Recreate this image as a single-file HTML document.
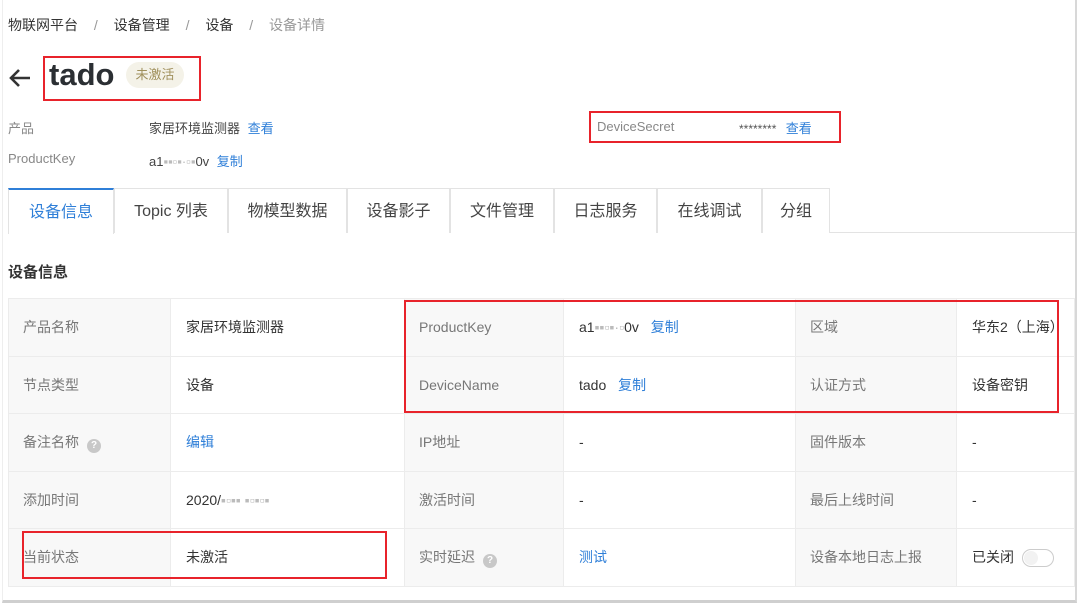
<!DOCTYPE html>
<html><head><meta charset="utf-8"><style>
*{box-sizing:border-box;margin:0;padding:0}
body{width:1080px;height:605px;background:#fff;font-family:"Liberation Sans","Noto Sans CJK SC",sans-serif;color:#333;position:relative;overflow:hidden}
.frame{position:absolute;left:2px;top:0;width:1075px;height:603px;border-right:2px solid #d8d8d8;border-bottom:3px solid #cfcfcf;border-left:1px solid #eee}
.a{position:absolute;white-space:nowrap}
.blue{color:#2f7fd8 !important}
.gray{color:#888}
.red{position:absolute;border:2px solid #e8232b}
.tabs{position:absolute;left:8px;top:188px;width:1067px;height:45px;border-bottom:1px solid #e3e3e3}
.tab{position:absolute;top:188px;height:45px;border:1px solid #e3e3e3;border-bottom:none;font-size:16px;color:#444;text-align:center;line-height:45px;background:#fff}
table{position:absolute;left:8px;top:298px;width:1067px;border-collapse:collapse;font-size:14px}
td{border:1px solid #ececec;height:57.5px;padding-left:14px}
td.l{background:#f8f8f8;color:#777}
td.v{color:#333;padding-left:15px}
.q{display:inline-block;width:14px;height:14px;border-radius:50%;background:#c8c8c8;color:#fff;font-size:10px;line-height:14px;text-align:center;margin-left:8px;vertical-align:-1px;font-weight:bold}
.sw{display:inline-block;width:32px;height:18px;border:1px solid #ccc;border-radius:9px;vertical-align:middle;margin-left:8px;position:relative}
.sw:after{content:"";position:absolute;left:1px;top:1px;width:14px;height:14px;border-radius:50%;background:#f2f2f2}
</style></head><body>
<div class="frame"></div>
<div class="a" style="left:8px;top:15px;font-size:14px;color:#333">物联网平台 <span style="color:#999;margin:0 12px">/</span> 设备管理 <span style="color:#999;margin:0 12px">/</span> 设备 <span style="color:#999;margin:0 12px">/</span> <span style="color:#999">设备详情</span></div>
<svg class="a" style="left:8px;top:68px" width="24" height="20" viewBox="0 0 24 20"><path d="M22 10H3M11 2L3 10l8 8" stroke="#333" stroke-width="2.6" fill="none"/></svg>
<div class="a" style="left:49px;top:57px;font-size:31px;font-weight:bold;color:#2b2f33">tado</div>
<div class="a" style="left:126px;top:62px;width:58px;height:26px;border-radius:13px;background:#f4f2e8;color:#a0905c;font-size:13px;line-height:26px;text-align:center">未激活</div>
<div class="red" style="left:43px;top:56px;width:158px;height:45px"></div>
<div class="a gray" style="left:8px;top:118px;font-size:13px">产品</div>
<div class="a" style="left:149px;top:118px;font-size:13px;color:#444">家居环境监测器 <span class="blue" style="margin-left:4px">查看</span></div>
<div class="a gray" style="left:8px;top:151px;font-size:13px">ProductKey</div>
<div class="a" style="left:149px;top:151px;font-size:13px;color:#444">a1<span style="color:#bbb">▪▪▫▪·▫▪</span>0v <span class="blue" style="margin-left:4px">复制</span></div>
<div class="a gray" style="left:597px;top:119px;font-size:13px">DeviceSecret</div>
<div class="a" style="left:739px;top:118px;font-size:12px;color:#555">******** <span class="blue" style="margin-left:6px;font-size:13px">查看</span></div>
<div class="red" style="left:589px;top:111px;width:252px;height:32px"></div>
<div class="tabs"></div>
<div class="tab" style="left:8px;width:106px;border-top:2px solid #2f7fd8;color:#2f7fd8;height:46px">设备信息</div>
<div class="tab" style="left:114px;width:114px">Topic 列表</div>
<div class="tab" style="left:228px;width:119px">物模型数据</div>
<div class="tab" style="left:347px;width:103px">设备影子</div>
<div class="tab" style="left:450px;width:104px">文件管理</div>
<div class="tab" style="left:554px;width:103px">日志服务</div>
<div class="tab" style="left:657px;width:105px">在线调试</div>
<div class="tab" style="left:762px;width:68px">分组</div>
<div class="a" style="left:8px;top:261px;font-size:15px;font-weight:bold;color:#333">设备信息</div>
<table>
<colgroup><col style="width:162px"><col style="width:234px"><col style="width:159px"><col style="width:232px"><col style="width:161px"><col></colgroup>
<tr><td class="l">产品名称</td><td class="v">家居环境监测器</td><td class="l">ProductKey</td><td class="v">a1<span style="color:#bbb">▪▪▫▪·▫</span>0v <span class="blue" style="margin-left:8px">复制</span></td><td class="l">区域</td><td class="v">华东2（上海）</td></tr>
<tr><td class="l">节点类型</td><td class="v">设备</td><td class="l">DeviceName</td><td class="v">tado <span class="blue" style="margin-left:8px">复制</span></td><td class="l">认证方式</td><td class="v">设备密钥</td></tr>
<tr><td class="l">备注名称<span class="q">?</span></td><td class="v blue">编辑</td><td class="l">IP地址</td><td class="v">-</td><td class="l">固件版本</td><td class="v">-</td></tr>
<tr><td class="l">添加时间</td><td class="v">2020/<span style="color:#bbb">▪▫▪▪ ▪▫▪▫▪</span></td><td class="l">激活时间</td><td class="v">-</td><td class="l">最后上线时间</td><td class="v">-</td></tr>
<tr><td class="l">当前状态</td><td class="v">未激活</td><td class="l">实时延迟<span class="q">?</span></td><td class="v blue">测试</td><td class="l">设备本地日志上报</td><td class="v">已关闭<span class="sw"></span></td></tr>
</table>
<div class="red" style="left:404px;top:300px;width:655px;height:113px"></div>
<div class="red" style="left:22px;top:531px;width:365px;height:48px"></div>
</body></html>
